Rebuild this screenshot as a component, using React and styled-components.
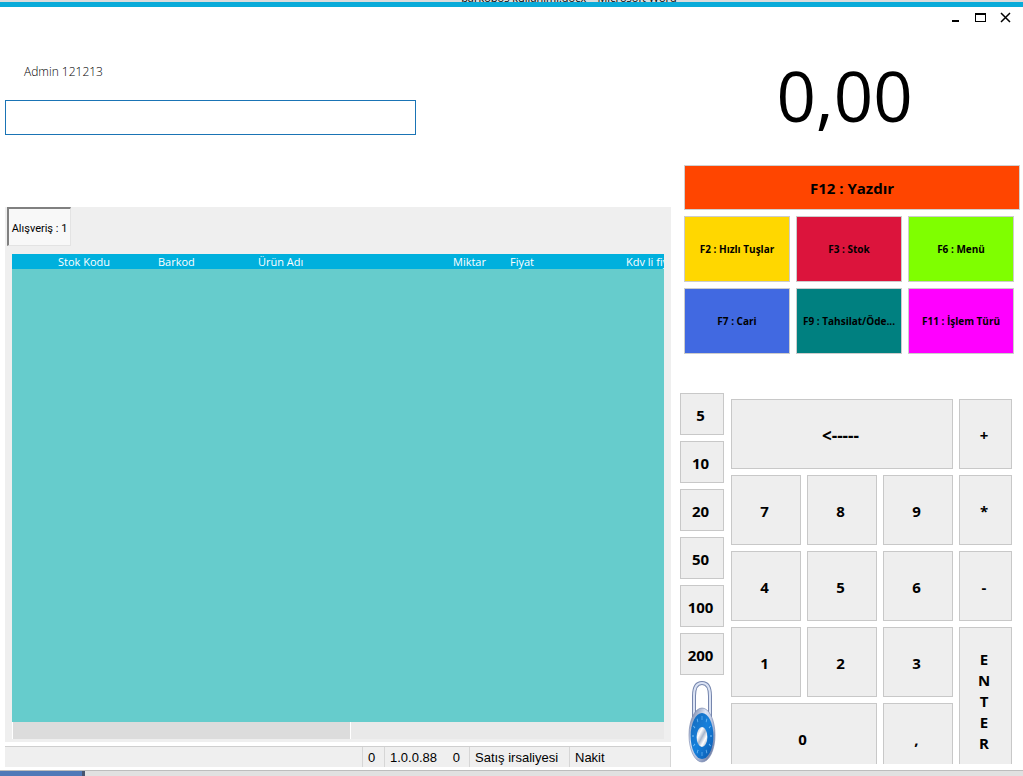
import React, { useState } from 'react'
import styled, { createGlobalStyle } from 'styled-components';

const quickActions = [
  { label: 'F2 : Hızlı Tuşlar', color: 'gold' },
  { label: 'F3 : Stok', color: 'crimson' },
  { label: 'F6 : Menü', color: 'chartreuse' },
  { label: 'F7 : Cari', color: 'royalblue' },
  { label: 'F9 : Tahsilat/Öde...', color: 'teal' },
  { label: 'F11 : İşlem Türü', color: 'magenta' },
];

const bills = ['5', '10', '20', '50', '100', '200'];

const keys = [
  { label: '<-----', cols: 3, size: 17 },
  { label: '+' },
  { label: '7' },
  { label: '8' },
  { label: '9' },
  { label: '*' },
  { label: '4' },
  { label: '5' },
  { label: '6' },
  { label: '-' },
  { label: '1' },
  { label: '2' },
  { label: '3' },
  { label: 'E\nN\nT\nE\nR', rows: 2 },
  { label: '0', cols: 2 },
  { label: ',' },
];

const columns = [
  { label: '', width: 43 },
  { label: 'Stok Kodu', width: 100 },
  { label: 'Barkod', width: 100 },
  { label: 'Ürün Adı', width: 195 },
  { label: 'Miktar', width: 57 },
  { label: 'Fiyat', width: 116 },
  { label: 'Kdv li fiyat', width: 80 },
];

const ticks = [0, 30, 60, 90, 120, 150, 180, 210, 240, 270, 300, 330];

const LockIcon = () => (
  <svg width="30" height="82" viewBox="0 0 30 82" aria-hidden="true">
    <defs>
      <linearGradient id="steel" x1="0" x2="1" y1="0" y2="1">
        <stop offset="0" stopColor="#55658f" />
        <stop offset="0.35" stopColor="#dfe6f5" />
        <stop offset="0.65" stopColor="#a9b7d6" />
        <stop offset="1" stopColor="#4a5a86" />
      </linearGradient>
      <linearGradient id="face" x1="0" y1="0" x2="1" y2="1">
        <stop offset="0" stopColor="#1668b8" />
        <stop offset="0.5" stopColor="#1580dc" />
        <stop offset="1" stopColor="#0b56ab" />
      </linearGradient>
      <linearGradient id="knob" x1="0" y1="0" x2="1" y2="1">
        <stop offset="0" stopColor="#93a6c4" />
        <stop offset="0.3" stopColor="#ffffff" />
        <stop offset="0.5" stopColor="#a8b6cc" />
        <stop offset="0.7" stopColor="#ffffff" />
        <stop offset="1" stopColor="#8496b6" />
      </linearGradient>
    </defs>
    <path d="M7 36V15C7 6 10 2 15 2s8 4 8 13v21" fill="none" stroke="#7686ad" strokeWidth="4" />
    <path d="M7 36V15C7 6 10 2 15 2s8 4 8 13v21" fill="none" stroke="#dbe3f4" strokeWidth="2" />
    <ellipse cx="15" cy="54" rx="13" ry="27" fill="url(#steel)" stroke="#7082ab" strokeWidth="0.6" />
    <ellipse cx="15" cy="55" rx="11.4" ry="23" fill="url(#face)" />
    <g transform="translate(15 55) scale(1 2)" stroke="#7cc4fa" strokeWidth="0.6">
      {ticks.map((angle) => (
        <line key={angle} y1="-10" y2="-8" transform={`rotate(${angle})`} />
      ))}
    </g>
    <ellipse cx="15" cy="56" rx="5.4" ry="10" fill="url(#knob)" />
  </svg>
);

const App = () => {
  const [barcode, setBarcode] = useState('');

  return (
    <Page>
      <GlobalStyle />
      <BackWindow>barkopos kullanimi.docx – Microsoft Word</BackWindow>
      <Main>
        <Sale>
          <UserName htmlFor="barcode">Admin 121213</UserName>
          <BarcodeInput
            id="barcode"
            type="text"
            value={barcode}
            onChange={(e) => setBarcode(e.target.value)}
          />
          <Panel>
            <Tabs role="tablist">
              <Tab type="button" role="tab" aria-selected="true">Alışveriş : 1</Tab>
            </Tabs>
            <TableArea>
              <Table>
                <colgroup>
                  {columns.map(({ label, width }) => <col key={label} width={width} />)}
                </colgroup>
                <thead>
                  <tr>
                    {columns.map(({ label }) => <HeadCell key={label}>{label}</HeadCell>)}
                  </tr>
                </thead>
              </Table>
            </TableArea>
            <ScrollTrack>
              <ScrollThumb />
            </ScrollTrack>
          </Panel>
          <StatusBar>
            <StatusCell $width={22}>0</StatusCell>
            <StatusCell $width={85}>
              <span>1.0.0.88</span>
              <span>0</span>
            </StatusCell>
            <StatusCell $width={100}>Satış irsaliyesi</StatusCell>
            <StatusCell $width={101}>Nakit</StatusCell>
          </StatusBar>
        </Sale>

        <Side>
          <WindowControls>
            <WindowButton type="button" aria-label="Simge durumuna küçült">
              <svg width="11" height="11"><path d="M2 8h7v2H2z" /></svg>
            </WindowButton>
            <WindowButton type="button" aria-label="Ekranı kapla">
              <svg width="11" height="11"><path d="M0 1h11v9H0zM1 3v6h9V3z" fillRule="evenodd" /></svg>
            </WindowButton>
            <WindowButton type="button" aria-label="Kapat">
              <svg width="11" height="11"><path d="M1 1l9 9M10 1l-9 9" stroke="#000" strokeWidth="1.500" /></svg>
            </WindowButton>
          </WindowControls>
          <Total>0,00</Total>
          <PrintButton type="button">F12 : Yazdır</PrintButton>
          <QuickActions>
            {quickActions.map(({ label, color }) => (
              <QuickButton key={label} type="button" $color={color}>{label}</QuickButton>
            ))}
          </QuickActions>
          <Pad>
            <Bills>
              {bills.map((bill) => <Key key={bill} type="button">{bill}</Key>)}
              <LockButton type="button" aria-label="Kilitle">
                <LockIcon />
              </LockButton>
            </Bills>
            <Keypad>
              {keys.map(({ label, cols, rows, size }) => (
                <Key key={label} type="button" $cols={cols} $rows={rows} $size={size}>{label}</Key>
              ))}
            </Keypad>
          </Pad>
        </Side>
      </Main>
      <Taskbar>
        <TaskbarItem />
      </Taskbar>
    </Page>
  )
}

export default App;

const GlobalStyle = createGlobalStyle`
  * {
    box-sizing: border-box;
  }

  body {
    margin: 0;
    background: #fff;
    color: #000;
    font-family: "Open Sans", "Noto Sans", sans-serif;
  }

  button, input {
    font-family: inherit;
    color: inherit;
    padding: 0;
    border-radius: 0;
  }
`

const Page = styled.div`
  display: flex;
  flex-direction: column;
  height: 100vh;
  overflow: hidden;
`

/* title of the window behind, only its lower edge shows */
const BackWindow = styled.div`
  display: flex;
  flex: none;
  justify-content: center;
  align-items: flex-end;
  height: 7px;
  padding-left: 115px;
  border-bottom: 5px solid #0aabd9;
  background: #dcdcdc;
  font-size: 11px;
  line-height: 9px;
  white-space: nowrap;
  overflow: hidden;
`

const Main = styled.main`
  display: grid;
  flex: 1;
  grid-template-columns: minmax(0, 1fr) 343px;
  column-gap: 9px;
  min-height: 0;
  padding-left: 5px;
`

const Sale = styled.section`
  display: flex;
  flex-direction: column;
  min-height: 0;
  padding: 55px 0 3px;
`

const UserName = styled.label`
  padding-left: 19px;
  font-size: 12px;
  font-weight: 300;
  line-height: 20px;
`

const BarcodeInput = styled.input`
  flex: none;
  width: 100%;
  max-width: 411px;
  height: 35px;
  margin: 18px 0 72px;
  padding: 0 8px;
  border: 1px solid #1a74b5;
  background: #fff;
  font-size: 16px;
  outline: none;
`

const Panel = styled.div`
  display: flex;
  flex: 1;
  flex-direction: column;
  min-height: 0;
  padding: 0 7px 3px;
  background: #efefef;
`

const Tabs = styled.div`
  display: flex;
  margin: 0 0 8px -5px;
`

const Tab = styled.button`
  width: 64px;
  height: 39px;
  padding-top: 2px;
  border: 1px solid #e3e3e3;
  border-top: 2px solid #808080;
  border-left: 2px solid #808080;
  background: #f8f8f8;
  font-family: Roboto, "Liberation Sans", sans-serif;
  font-size: 11px;
  white-space: nowrap;
`

const TableArea = styled.div`
  flex: 1;
  min-height: 0;
  background: #66cccc;
  overflow: hidden;
`

const Table = styled.table`
  width: 691px;
  border-collapse: collapse;
  table-layout: fixed;
`

const HeadCell = styled.th`
  height: 15px;
  padding: 0 0 0 3px;
  background: #00b0dd;
  color: #fff;
  font-size: 11px;
  font-weight: 400;
  line-height: 15px;
  text-align: left;
  white-space: nowrap;
`

const ScrollTrack = styled.div`
  height: 17px;
  background: #e9e9e9;
`

const ScrollThumb = styled.div`
  width: 52%;
  height: 100%;
  border: solid #fff;
  border-width: 0 1px;
  background: #dcdcdc;
`

const StatusBar = styled.footer`
  display: flex;
  flex: none;
  justify-content: flex-end;
  height: 21px;
  margin-top: 4px;
  border-top: 1px solid #cfcfcf;
  border-right: 1px solid #d6d6d6;
  background: #efefef;
  font-family: "Liberation Sans", Arial, sans-serif;
  font-size: 13px;
  line-height: 21px;
`

const StatusCell = styled.div`
  display: flex;
  justify-content: space-between;
  width: ${({ $width }) => $width}px;
  padding: 0 9px 0 5px;
  border-left: 1px solid #d6d6d6;
  white-space: nowrap;
`

const Side = styled.aside`
  display: flex;
  flex-direction: column;
  min-height: 0;
  padding-bottom: 6px;
`

const WindowControls = styled.div`
  display: flex;
  justify-content: flex-end;
  gap: 14px;
  padding: 5px 12px 0 0;
`

const WindowButton = styled.button`
  display: flex;
  width: 11px;
  height: 11px;
  border: 0;
  background: none;
`

const Total = styled.output`
  padding: 24px 14px 22px 0;
  font-size: 69px;
  line-height: 96px;
  text-align: center;
`

const PrintButton = styled.button`
  flex: none;
  height: 45px;
  margin: 0 3px 6px 4px;
  border: 1px solid #d0d0d0;
  background: orangered;
  font-size: 15px;
  font-weight: 700;
`

const QuickActions = styled.div`
  display: grid;
  flex: none;
  grid-template-columns: repeat(3, 1fr);
  grid-auto-rows: 66px;
  gap: 6px;
  margin: 0 9px 39px 4px;
`

const QuickButton = styled.button`
  border: 1px solid #cccccc;
  background: ${({ $color }) => $color};
  font-size: 10px;
  font-weight: 700;
  white-space: nowrap;
`

const Pad = styled.div`
  display: grid;
  flex: 1;
  grid-template-columns: 44px 1fr;
  column-gap: 7px;
  min-height: 0;
  padding-right: 11px;
  overflow: hidden;
`

const Bills = styled.div`
  display: grid;
  grid-auto-rows: 42px;
  align-content: start;
  gap: 6px;
`

const Keypad = styled.div`
  display: grid;
  grid-template-columns: 70fr 70fr 70fr 53fr;
  grid-auto-rows: 70px;
  align-content: start;
  gap: 6px;
  padding-top: 6px;
`

const Key = styled.button`
  grid-column: span ${({ $cols = 1 }) => $cols};
  grid-row: span ${({ $rows = 1 }) => $rows};
  padding: 3px 3px 0 0;
  border: 1px solid #c8c8c8;
  background: #eeeeee;
  font-size: ${({ $size = 15 }) => $size}px;
  font-weight: 700;
  line-height: 21px;
  white-space: pre-line;
`

const LockButton = styled.button`
  display: flex;
  justify-content: center;
  height: 82px;
  border: 0;
  background: none;
`

const Taskbar = styled.div`
  flex: none;
  height: 6px;
  border-top: 1px solid #bdbdbd;
  background: #e1e1e1;
`

const TaskbarItem = styled.div`
  width: 85px;
  height: 100%;
  border-right: 3px solid #47556f;
  background: #5079b8;
`
